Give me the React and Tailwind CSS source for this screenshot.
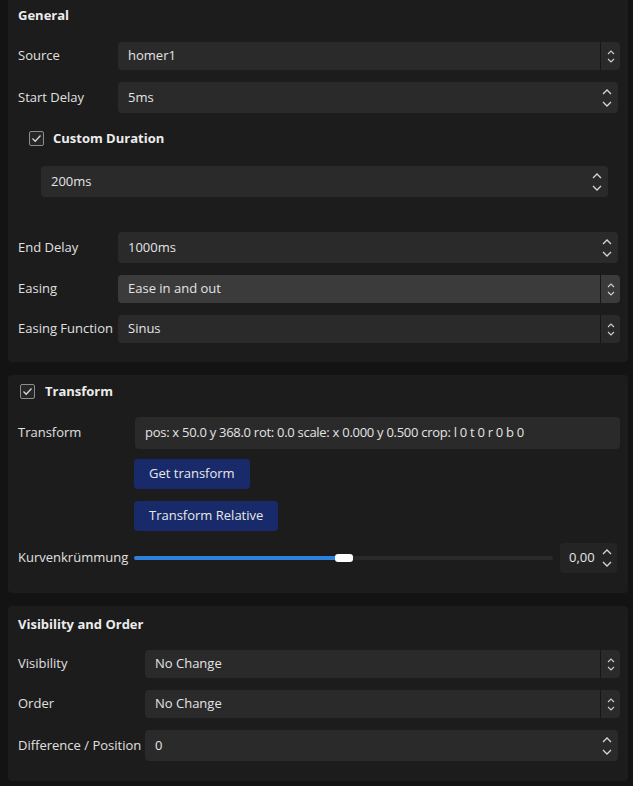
import React from "react";

const font = { fontFamily: '"Open Sans", "Noto Sans", sans-serif' };

function SpinArrows() {
  return (
    <div className="flex flex-col items-center justify-center gap-[6px] w-[18px] shrink-0">
      <svg width="10" height="6" viewBox="0 0 10 6" fill="none">
        <path d="M1 5 L5 1 L9 5" stroke="#d6d6d6" strokeWidth="1.3" />
      </svg>
      <svg width="10" height="6" viewBox="0 0 10 6" fill="none">
        <path d="M1 1 L5 5 L9 1" stroke="#d6d6d6" strokeWidth="1.3" />
      </svg>
    </div>
  );
}

function ComboArrows() {
  return (
    <div className="flex flex-col items-center justify-center gap-[3px] w-[20px] h-full border-l border-[#161616] shrink-0">
      <svg width="8" height="5" viewBox="0 0 8 5" fill="none">
        <path d="M1 4 L4 1 L7 4" stroke="#d0d0d0" strokeWidth="1.1" />
      </svg>
      <svg width="8" height="5" viewBox="0 0 8 5" fill="none">
        <path d="M1 1 L4 4 L7 1" stroke="#d0d0d0" strokeWidth="1.1" />
      </svg>
    </div>
  );
}

function Spin({ value, className = "" }) {
  return (
    <div className={`flex items-center h-[31px] rounded-[4px] bg-[#2a2a2b] pl-[10px] pr-[2px] ${className}`}>
      <span className="flex-1 text-[13px] text-[#e4e4e4]">{value}</span>
      <SpinArrows />
    </div>
  );
}

function Combo({ value, light = false, className = "" }) {
  return (
    <div className={`flex items-center h-[28px] rounded-[4px] ${light ? "bg-[#3b3b3c]" : "bg-[#2a2a2b]"} pl-[10px] ${className}`}>
      <span className="flex-1 text-[13px] text-[#e4e4e4]">{value}</span>
      <ComboArrows />
    </div>
  );
}

function Check() {
  return (
    <div className="w-[15px] h-[15px] rounded-[2px] border border-[#8c8c8c] bg-[#262626] flex items-center justify-center shrink-0">
      <svg width="11" height="9" viewBox="0 0 11 9" fill="none">
        <path d="M1.5 4.5 L4.2 7.2 L9.5 1.5" stroke="#d8d8d8" strokeWidth="1.3" />
      </svg>
    </div>
  );
}

function Row({ label, labelW, children, className = "" }) {
  return (
    <div className={`flex items-center ${className}`}>
      <div style={{ width: labelW }} className="shrink-0 text-[13px] text-[#e0e0e0]">{label}</div>
      <div className="flex-1">{children}</div>
    </div>
  );
}

export default function App() {
  return (
    <div style={font} className="w-[633px] h-[786px] bg-[#131313] pl-[8px] pr-[5px] overflow-hidden">
      {/* General */}
      <div className="h-[362px] bg-[#1c1c1c] rounded-b-[4px] pl-[10px] pr-[8px] pt-[5px]">
        <div className="text-[13px] font-bold text-[#ececec] h-[20px] leading-[20px]">General</div>
        <Row label="Source" labelW={100} className="mt-[17px]">
          <Combo value="homer1" />
        </Row>
        <Row label="Start Delay" labelW={100} className="mt-[12px]">
          <Spin value="5ms" className="mr-[2px]" />
        </Row>
        <div className="flex items-center mt-[18px] ml-[11px] h-[15px]">
          <Check />
          <span className="ml-[9px] text-[13px] font-bold text-[#ececec]">Custom Duration</span>
        </div>
        <div className="mt-[20px] ml-[23px] mr-[12px]">
          <Spin value="200ms" />
        </div>
        <Row label="End Delay" labelW={100} className="mt-[35px]">
          <Spin value="1000ms" className="mr-[2px]" />
        </Row>
        <Row label="Easing" labelW={100} className="mt-[12px]">
          <Combo value="Ease in and out" light />
        </Row>
        <Row label="Easing Function" labelW={100} className="mt-[12px]">
          <Combo value="Sinus" />
        </Row>
      </div>

      {/* Transform */}
      <div className="mt-[13px] h-[218px] bg-[#1c1c1c] rounded-[4px] pl-[10px] pr-[8px] pt-[9px]">
        <div className="flex items-center h-[15px] ml-[2px]">
          <Check />
          <span className="ml-[10px] text-[13px] font-bold text-[#ececec]">Transform</span>
        </div>
        <div className="flex mt-[18px]">
          <div className="w-[117px] shrink-0 text-[13px] text-[#e0e0e0] pt-[6px]">Transform</div>
          <div className="flex-1 flex flex-col items-start">
            <div className="w-full h-[32px] bg-[#2a2a2b] rounded-[4px] pl-[10px] flex items-center text-[13px] tracking-[-0.28px] text-[#e4e4e4] whitespace-nowrap overflow-hidden">
              pos: x 50.0 y 368.0 rot: 0.0 scale: x 0.000 y 0.500 crop: l 0 t 0 r 0 b 0
            </div>
            <div className="mt-[10px] -ml-[1px] h-[30px] px-[15px] bg-[#182a6a] rounded-[4px] flex items-center text-[13px] text-[#e8e8e8]">
              Get transform
            </div>
            <div className="mt-[12px] -ml-[1px] h-[30px] px-[15px] bg-[#182a6a] rounded-[4px] flex items-center text-[13px] text-[#e8e8e8]">
              Transform Relative
            </div>
          </div>
        </div>
        <div className="flex items-center mt-[12px] h-[30px]">
          <div className="w-[116px] shrink-0 text-[13px] text-[#e0e0e0]">Kurvenkrümmung</div>
          <div className="relative flex-1 h-[10px] flex items-center mr-[7px]">
            <div className="w-full h-[4px] rounded-[2px] bg-[#2a2a2a]" />
            <div className="absolute left-0 top-[3px] h-[4px] w-[204px] rounded-l-[2px] bg-[#2e82dc]" />
            <div className="absolute left-[201px] top-[1px] h-[8px] w-[18px] rounded-[3px] bg-white" />
          </div>
          <div className="w-[57px] h-[30px] rounded-[4px] bg-[#242424] flex items-center pl-[9px] pr-[1px] mr-[3px]">
            <span className="flex-1 text-[13px] text-[#e4e4e4]">0,00</span>
            <SpinArrows />
          </div>
        </div>
      </div>

      {/* Visibility */}
      <div className="mt-[13px] h-[175px] bg-[#1c1c1c] rounded-[4px] pl-[10px] pr-[8px] pt-[8px]">
        <div className="text-[13px] font-bold text-[#ececec] h-[20px] leading-[20px]">Visibility and Order</div>
        <Row label="Visibility" labelW={127} className="mt-[16px]">
          <Combo value="No Change" />
        </Row>
        <Row label="Order" labelW={127} className="mt-[12px]">
          <Combo value="No Change" />
        </Row>
        <Row label="Difference / Position" labelW={127} className="mt-[12px]">
          <Spin value="0" className="mr-[2px]" />
        </Row>
      </div>
    </div>
  );
}
